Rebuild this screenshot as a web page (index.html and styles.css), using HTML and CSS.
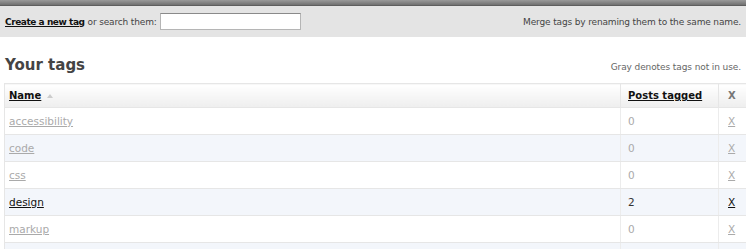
FILE: index.html
```html
<!DOCTYPE html>
<html>
<head>
<meta charset="utf-8">
<link rel="stylesheet" href="styles.css">
</head>
<body>
<div class="topbar"></div>
<div class="toolbar">
  <div class="left"><a href="#" class="create">Create a new tag</a> or search them: <input type="text" class="search"></div>
  <div class="right">Merge tags by renaming them to the same name.</div>
</div>
<div class="heading">
  <h1>Your tags</h1>
  <span class="note">Gray denotes tags not in use.</span>
</div>
<div class="tablewrap">
<table class="tags">
  <colgroup><col class="c1"><col class="c2"><col class="c3"></colgroup>
  <thead>
    <tr><th class="name"><a href="#">Name</a> <span class="arrow"></span></th><th class="count"><a href="#">Posts tagged</a></th><th class="del">X</th></tr>
  </thead>
  <tbody>
    <tr class="unused"><td><a href="#">accessibility</a></td><td>0</td><td class="del"><a href="#">X</a></td></tr>
    <tr class="unused alt"><td><a href="#">code</a></td><td>0</td><td class="del"><a href="#">X</a></td></tr>
    <tr class="unused"><td><a href="#">css</a></td><td>0</td><td class="del"><a href="#">X</a></td></tr>
    <tr class="alt"><td><a href="#">design</a></td><td>2</td><td class="del"><a href="#">X</a></td></tr>
    <tr class="unused"><td><a href="#">markup</a></td><td>0</td><td class="del"><a href="#">X</a></td></tr>
    <tr class="unused alt"><td><a href="#">semantics</a></td><td>0</td><td class="del"><a href="#">X</a></td></tr>
  </tbody>
</table>
</div>
</body>
</html>
```
FILE: styles.css
```css
html, body { margin: 0; padding: 0; background: #fff; }
body { font-family: "DejaVu Sans", Verdana, sans-serif; font-size: 9px; color: #333; overflow: hidden; }
a { color: #111; }
.topbar { height: 5px; background: linear-gradient(#9a9a9a, #707070); border-bottom: 1px solid #5e5e5e; }
.toolbar { background: #e4e4e4; height: 31px; display: flex; align-items: center; justify-content: space-between; padding: 0 5px 0 5px; color: #444; letter-spacing: -0.15px; }
.toolbar .left { display: flex; align-items: center; }
.create { font-weight: bold; margin-right: 3px; letter-spacing: -0.45px; }
.search { width: 139px; height: 15px; margin: 0 0 0 3px; padding: 0; border: 1px solid #b5b5b5; border-top-color: #8a8a8a; background: #fff; }
.heading { display: flex; justify-content: space-between; align-items: baseline; padding: 0 5px 0 5px; margin-top: 19px; }
h1 { margin: 0; font-size: 15px; font-weight: bold; color: #444; }
.note { color: #666; letter-spacing: -0.1px; }
.tablewrap { margin: 9px 0 0 4px; width: 760px; }
.tags { border-collapse: collapse; table-layout: fixed; width: 756px; font-size: 10.5px; }
.tags col.c1 { width: 616px; }
.tags col.c2 { width: 98px; }
.tags col.c3 { width: 42px; }
.tags th, .tags td { height: 26px; padding: 0 0 0 4px; text-align: left; border: 1px solid #e6e6e6; overflow: hidden; white-space: nowrap; }
.tags th { height: 23px; background: linear-gradient(#fff, #eeeeee); font-weight: bold; font-size: 10px; }
.tags th.count, .tags td:nth-child(2) { padding-left: 7px; }
.tags .del { padding-left: 9px; }
.tags th.del { color: #777; font-weight: bold; }
.arrow { display: inline-block; width: 0; height: 0; border-left: 3px solid transparent; border-right: 3px solid transparent; border-bottom: 4px solid #ccc; margin-left: 2px; vertical-align: 1px; }
.tags tr.alt td { background: #f3f6fb; }
.tags tr.unused td, .tags tr.unused a { color: #aaa; }
.tags tbody td { border-left: none; border-right: 1px solid #ececec; }
.tags tbody td:first-child { border-left: 1px solid #e6e6e6; }
```
